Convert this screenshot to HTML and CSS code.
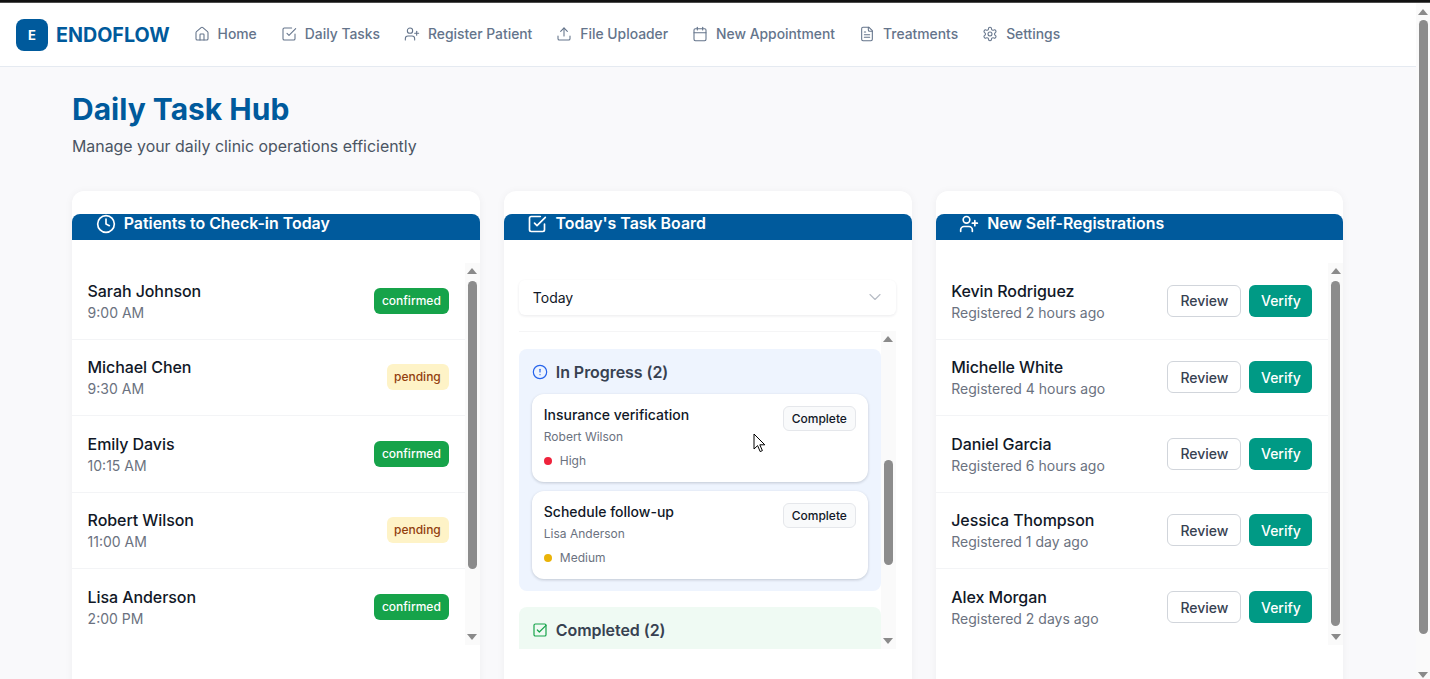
FILE: index.html
```html
<!DOCTYPE html>
<html lang="en">
<head>
<meta charset="utf-8">
<title>ENDOFLOW - Daily Task Hub</title>
<link rel="stylesheet" href="styles.css">
</head>
<body>
<div class="topline"></div>
<div class="window">
  <div class="page">
    <nav class="nav">
      <div class="brand"><span class="logo">E</span><span class="brand-name">ENDOFLOW</span></div>
      <div class="nav-links">
        <a class="nav-link"><svg class="ic" viewBox="0 0 24 24"><path d="M15 21v-8a1 1 0 0 0-1-1h-4a1 1 0 0 0-1 1v8"/><path d="M3 10a2 2 0 0 1 .709-1.528l7-5.999a2 2 0 0 1 2.582 0l7 5.999A2 2 0 0 1 21 10v9a2 2 0 0 1-2 2H5a2 2 0 0 1-2-2z"/></svg>Home</a>
        <a class="nav-link"><svg class="ic" viewBox="0 0 24 24"><polyline points="9 11 12 14 22 4"/><path d="M21 12v7a2 2 0 0 1-2 2H5a2 2 0 0 1-2-2V5a2 2 0 0 1 2-2h11"/></svg>Daily Tasks</a>
        <a class="nav-link"><svg class="ic" viewBox="0 0 24 24"><path d="M16 21v-2a4 4 0 0 0-4-4H6a4 4 0 0 0-4 4v2"/><circle cx="9" cy="7" r="4"/><line x1="19" y1="8" x2="19" y2="14"/><line x1="22" y1="11" x2="16" y2="11"/></svg>Register Patient</a>
        <a class="nav-link"><svg class="ic" viewBox="0 0 24 24"><path d="M21 15v4a2 2 0 0 1-2 2H5a2 2 0 0 1-2-2v-4"/><polyline points="17 8 12 3 7 8"/><line x1="12" y1="3" x2="12" y2="15"/></svg>File Uploader</a>
        <a class="nav-link"><svg class="ic" viewBox="0 0 24 24"><path d="M8 2v4"/><path d="M16 2v4"/><rect x="3" y="4" width="18" height="18" rx="2"/><path d="M3 10h18"/></svg>New Appointment</a>
        <a class="nav-link"><svg class="ic" viewBox="0 0 24 24"><path d="M15 2H6a2 2 0 0 0-2 2v16a2 2 0 0 0 2 2h12a2 2 0 0 0 2-2V7Z"/><path d="M14 2v4a2 2 0 0 0 2 2h4"/><path d="M10 9H8"/><path d="M16 13H8"/><path d="M16 17H8"/></svg>Treatments</a>
        <a class="nav-link"><svg class="ic" viewBox="0 0 24 24"><path d="M12.22 2h-.44a2 2 0 0 0-2 2v.18a2 2 0 0 1-1 1.73l-.43.25a2 2 0 0 1-2 0l-.15-.08a2 2 0 0 0-2.73.73l-.22.38a2 2 0 0 0 .73 2.73l.15.1a2 2 0 0 1 1 1.72v.51a2 2 0 0 1-1 1.74l-.15.09a2 2 0 0 0-.73 2.73l.22.38a2 2 0 0 0 2.73.73l.15-.08a2 2 0 0 1 2 0l.43.25a2 2 0 0 1 1 1.73V20a2 2 0 0 0 2 2h.44a2 2 0 0 0 2-2v-.18a2 2 0 0 1 1-1.73l.43-.25a2 2 0 0 1 2 0l.15.08a2 2 0 0 0 2.73-.73l.22-.39a2 2 0 0 0-.73-2.73l-.15-.08a2 2 0 0 1-1-1.74v-.5a2 2 0 0 1 1-1.74l.15-.09a2 2 0 0 0 .73-2.73l-.22-.38a2 2 0 0 0-2.73-.73l-.15.08a2 2 0 0 1-2 0l-.43-.25a2 2 0 0 1-1-1.73V4a2 2 0 0 0-2-2z"/><circle cx="12" cy="12" r="3"/></svg>Settings</a>
      </div>
    </nav>

    <main class="main">
      <h1 class="title">Daily Task Hub</h1>
      <p class="subtitle">Manage your daily clinic operations efficiently</p>

      <div class="columns">
        <section class="card">
          <h2 class="card-head"><svg class="ic ic-head" viewBox="0 0 24 24"><circle cx="12" cy="12" r="10"/><polyline points="12 6 12 12 16 14"/></svg>Patients to Check-in Today</h2>
          <div class="scroller list-scroller">
            <div class="list">
              <div class="row"><div><div class="name">Sarah Johnson</div><div class="meta">9:00 AM</div></div><span class="badge confirmed">confirmed</span></div>
              <div class="row"><div><div class="name">Michael Chen</div><div class="meta">9:30 AM</div></div><span class="badge pending">pending</span></div>
              <div class="row"><div><div class="name">Emily Davis</div><div class="meta">10:15 AM</div></div><span class="badge confirmed">confirmed</span></div>
              <div class="row"><div><div class="name">Robert Wilson</div><div class="meta">11:00 AM</div></div><span class="badge pending">pending</span></div>
              <div class="row"><div><div class="name">Lisa Anderson</div><div class="meta">2:00 PM</div></div><span class="badge confirmed">confirmed</span></div>
            </div>
            <div class="track"><span class="arrow up"></span><span class="thumb thumb-left"></span><span class="arrow down"></span></div>
          </div>
        </section>

        <section class="card">
          <h2 class="card-head"><svg class="ic ic-head" viewBox="0 0 24 24"><polyline points="9 11 12 14 22 4"/><path d="M21 12v7a2 2 0 0 1-2 2H5a2 2 0 0 1-2-2V5a2 2 0 0 1 2-2h11"/></svg>Today's Task Board</h2>
          <div class="board">
            <div class="select"><span>Today</span><svg class="chev" viewBox="0 0 24 24"><path d="m6 9 6 6 6-6"/></svg></div>
            <div class="scroller board-scroller">
              <div class="board-list">
                <div class="panel panel-blue">
                  <h3 class="panel-title"><svg class="ic ic-blue" viewBox="0 0 24 24"><circle cx="12" cy="12" r="10"/><line x1="12" y1="8" x2="12" y2="12"/><line x1="12" y1="16" x2="12.01" y2="16"/></svg>In Progress (2)</h3>
                  <div class="task">
                    <div class="task-body"><div class="task-name">Insurance verification</div><div class="task-who">Robert Wilson</div><div class="task-pri"><span class="dot dot-red"></span>High</div></div>
                    <button class="complete">Complete</button>
                  </div>
                  <div class="task">
                    <div class="task-body"><div class="task-name">Schedule follow-up</div><div class="task-who">Lisa Anderson</div><div class="task-pri"><span class="dot dot-amber"></span>Medium</div></div>
                    <button class="complete">Complete</button>
                  </div>
                </div>
                <div class="panel panel-green">
                  <h3 class="panel-title"><svg class="ic ic-green" viewBox="0 0 24 24"><rect x="3" y="3" width="18" height="18" rx="2"/><polyline points="8 12 11 15 21 5"/></svg>Completed (2)</h3>
                </div>
              </div>
              <div class="track track-board"><span class="arrow up"></span><span class="thumb thumb-board"></span><span class="arrow down"></span></div>
            </div>
          </div>
        </section>

        <section class="card">
          <h2 class="card-head"><svg class="ic ic-head" viewBox="0 0 24 24"><path d="M16 21v-2a4 4 0 0 0-4-4H6a4 4 0 0 0-4 4v2"/><circle cx="9" cy="7" r="4"/><line x1="19" y1="8" x2="19" y2="14"/><line x1="22" y1="11" x2="16" y2="11"/></svg>New Self-Registrations</h2>
          <div class="scroller list-scroller">
            <div class="list">
              <div class="row"><div><div class="name">Kevin Rodriguez</div><div class="meta">Registered 2 hours ago</div></div><div class="actions"><button class="btn review">Review</button><button class="btn verify">Verify</button></div></div>
              <div class="row"><div><div class="name">Michelle White</div><div class="meta">Registered 4 hours ago</div></div><div class="actions"><button class="btn review">Review</button><button class="btn verify">Verify</button></div></div>
              <div class="row"><div><div class="name">Daniel Garcia</div><div class="meta">Registered 6 hours ago</div></div><div class="actions"><button class="btn review">Review</button><button class="btn verify">Verify</button></div></div>
              <div class="row"><div><div class="name">Jessica Thompson</div><div class="meta">Registered 1 day ago</div></div><div class="actions"><button class="btn review">Review</button><button class="btn verify">Verify</button></div></div>
              <div class="row"><div><div class="name">Alex Morgan</div><div class="meta">Registered 2 days ago</div></div><div class="actions"><button class="btn review">Review</button><button class="btn verify">Verify</button></div></div>
            </div>
            <div class="track"><span class="arrow up"></span><span class="thumb thumb-right"></span><span class="arrow down"></span></div>
          </div>
        </section>
      </div>
    </main>
  </div>

  <div class="track track-page"><span class="arrow up"></span><span class="thumb thumb-page"></span><span class="arrow down"></span></div>
</div>

<svg class="cursor" viewBox="0 0 14 21"><path d="M1 1v15l3.6-3.4 2.6 6 2.2-1-2.6-5.8h5z"/></svg>
</body>
</html>
```

FILE: styles.css
```css
* { box-sizing: border-box; }

html, body {
  margin: 0;
  height: 679px;
  overflow: hidden;
}

body {
  display: flex;
  flex-direction: column;
  font-family: Inter, "Liberation Sans", sans-serif;
  background: #f9f9fb;
  color: #111827;
  position: relative;
}

.topline {
  height: 3px;
  flex: none;
  background: linear-gradient(#111 0, #111 2px, #888 3px);
}

.window {
  flex: 1;
  display: flex;
  min-height: 0;
}

.page {
  flex: 1;
  min-width: 0;
  overflow: hidden;
}

.ic {
  width: 16px;
  height: 16px;
  flex: none;
  fill: none;
  stroke: currentColor;
  stroke-width: 2;
  stroke-linecap: round;
  stroke-linejoin: round;
}

/* nav */
.nav {
  height: 64px;
  background: #fff;
  border-bottom: 1px solid #e5eaf1;
  display: flex;
  align-items: center;
  padding: 0 16px;
}

.brand {
  display: flex;
  align-items: center;
  gap: 8px;
}

.logo {
  width: 32px;
  height: 32px;
  border-radius: 8px;
  background: #005a9c;
  color: #fff;
  font-size: 13px;
  font-weight: 700;
  display: flex;
  align-items: center;
  justify-content: center;
}

.brand-name {
  font-size: 19.7px;
  font-weight: 700;
  color: #005a9c;
}

.nav-links {
  display: flex;
  gap: 24px;
  margin-left: 24px;
}

.nav-link {
  display: flex;
  align-items: center;
  gap: 8px;
  font-size: 13.87px;
  font-weight: 450;
  color: #64748b;
  line-height: 19px;
  padding-bottom: 1px;
}

.nav-link .ic { stroke-width: 1.6; }

/* heading */
.main { padding: 24px 72.6px 0 72px; }

.title {
  margin: 0;
  font-size: 30px;
  line-height: 36px;
  font-weight: 700;
  color: #005a9c;
}

.subtitle {
  margin: 8px 0 0;
  font-size: 15.9px;
  line-height: 24px;
  color: #4b5563;
}

.columns {
  margin-top: 32px;
  display: grid;
  grid-template-columns: repeat(3, 1fr);
  gap: 24px;
}

/* cards */
.card {
  height: 560px;
  background: #fff;
  border-radius: 12px;
  padding-top: 23px;
  box-shadow: 0 1px 8px rgba(17, 24, 39, 0.05);
}

.card-head {
  margin: 0;
  height: 26px;
  padding: 0 24px 0 23.7px;
  display: flex;
  align-items: flex-start;
  gap: 8px;
  background: #005a9c;
  color: #fff;
  border-radius: 8px 8px 0 0;
  font-size: 15.9px;
  line-height: 20px;
  font-weight: 600;
}

.ic-head { width: 20px; height: 20px; }

.scroller { display: flex; }

.list-scroller {
  margin-top: 23px;
  height: 382px;
}

.list { flex: 1; min-width: 0; }

.row {
  height: 76.5px;
  padding: 0 16px 0 15.6px;
  display: flex;
  align-items: center;
  justify-content: space-between;
  border-bottom: 1px solid #f3f4f6;
}

.row:last-child { border-bottom: 0; }

.name {
  font-size: 16px;
  letter-spacing: -0.08px;
  line-height: 24px;
  font-weight: 450;
  color: #111827;
}

.meta {
  font-size: 14px;
  line-height: 20px;
  color: #6b7280;
}

.badge {
  height: 26px;
  padding: 0 8px;
  border-radius: 6px;
  font-size: 12px;
  font-weight: 500;
  line-height: 26px;
}

.confirmed { background: #16a34a; color: #fff; }
.pending { background: #fef3c7; color: #92400e; padding-left: 7.5px; }

.actions { display: flex; gap: 8px; }

.btn {
  height: 32px;
  border-radius: 6px;
  font: 450 14px Inter, "Liberation Sans", sans-serif;
  padding: 0;
}

.review {
  width: 74px;
  background: #fff;
  border: 1px solid #d1d5db;
  color: #374151;
}

.verify {
  width: 63px;
  background: #009a85;
  border: 0;
  color: #fff;
}

/* scrollbars */
.track {
  width: 15px;
  flex: none;
  background: #fafafa;
  display: flex;
  flex-direction: column;
  align-items: center;
  padding: 5px 0;
}

.arrow {
  width: 0;
  height: 0;
  flex: none;
  border-left: 5px solid transparent;
  border-right: 5px solid transparent;
}

.arrow.up { border-bottom: 6px solid #8a8a8a; }
.arrow.down { border-top: 6px solid #8a8a8a; margin-top: auto; }

.thumb {
  width: 9px;
  border-radius: 5px;
  background: #8c8c8c;
  flex: none;
}

.thumb-left { margin-top: 7px; height: 288px; }
.thumb-right { margin-top: 7px; height: 345px; }
.thumb-board { margin-top: 118px; height: 105px; }

.track-page { width: 14px; padding: 6px 0 1px; }
.thumb-page { margin-top: 5px; height: 614px; }

/* board */
.board { padding: 40px 15.8px 0 15px; }

.select {
  height: 35px;
  border-radius: 6px;
  background: #fff;
  box-shadow: 0 1px 3px rgba(17, 24, 39, 0.09);
  display: flex;
  align-items: center;
  justify-content: space-between;
  padding: 0 11px 1px 14px;
  font-size: 14px;
  color: #111827;
}

.chev {
  width: 20px;
  height: 20px;
  fill: none;
  stroke: #b8bdc6;
  stroke-width: 1.4;
  stroke-linecap: round;
  stroke-linejoin: round;
}

.board-scroller {
  margin-top: 16px;
  height: 318px;
  overflow: hidden;
}

.board-list {
  flex: 1;
  min-width: 0;
  padding-top: 17px;
  border-top: 1px solid #f5f5f6;
  overflow: hidden;
}

.panel {
  border-radius: 8px;
  padding: 11px 13px;
  margin-bottom: 16px;
}

.panel-blue { background: #eef4fe; height: 242px; }
.panel-green { background: #effaf3; height: 120px; }

.panel-title {
  margin: 0 0 10px;
  display: flex;
  align-items: center;
  gap: 8px;
  font-size: 16px;
  letter-spacing: -0.06px;
  line-height: 24px;
  font-weight: 600;
  color: #374151;
}

.ic-blue { color: #2563eb; stroke-width: 1.8; }
.ic-green { color: #16a34a; stroke-width: 1.8; }

.task {
  height: 87.5px;
  margin-bottom: 9.5px;
  background: #fff;
  border-radius: 12px;
  padding: 11px 12px;
  box-shadow: 0 1px 3px rgba(17, 24, 39, 0.2);
  display: flex;
  justify-content: space-between;
  align-items: flex-start;
}

.task-name {
  font-size: 14px;
  line-height: 20px;
  font-weight: 450;
  color: #111827;
}

.task-who {
  margin-top: 4px;
  font-size: 12px;
  line-height: 16px;
  color: #6b7280;
}

.task-pri {
  margin-top: 7.5px;
  display: flex;
  align-items: center;
  gap: 8px;
  font-size: 12px;
  line-height: 16px;
  color: #6b7280;
}

.dot { width: 8px; height: 8px; border-radius: 50%; }
.dot-red { background: #ef233c; }
.dot-amber { background: #eab308; }

.complete {
  width: 73px;
  height: 25px;
  margin-top: 1px;
  padding: 0;
  background: #f9fafb;
  border: 1px solid #e5e7eb;
  border-radius: 6px;
  font: 450 12px Inter, "Liberation Sans", sans-serif;
  color: #111827;
}

/* pointer over the page */
.cursor {
  position: absolute;
  left: 753px;
  top: 433px;
  width: 14px;
  height: 21px;
  fill: #fff;
  stroke: #000;
  stroke-width: 1;
}
```
